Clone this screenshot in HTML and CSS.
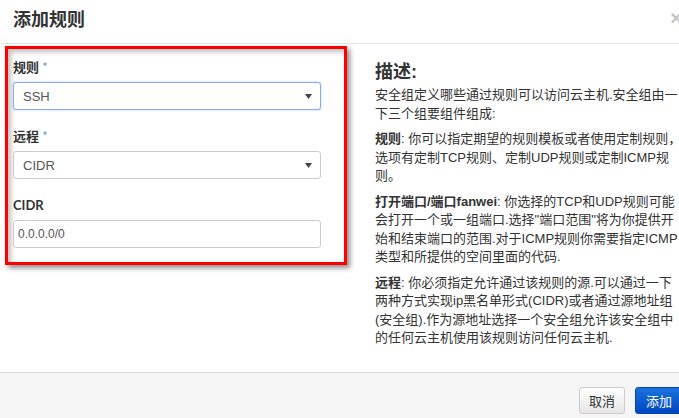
FILE: index.html
```html
<!DOCTYPE html>
<html lang="zh-CN">
<head>
    <meta charset="UTF-8">
    <meta name="viewport" content="width=device-width, initial-scale=1.0">
    <title>添加规则</title>
    <link rel="stylesheet" href="styles.css">
</head>
<body>
    <div class="modal">
        <div class="modal-header">
            <h3 class="modal-title">添加规则</h3>
            <span class="close">×</span>
        </div>

        <div class="modal-body">
            <!-- Form fields -->
            <div class="form-box">
                <div class="form-group">
                    <label>规则 <span class="req">*</span></label>
                    <div class="select focused">
                        <span>SSH</span>
                        <svg class="caret" width="7" height="5" viewBox="0 0 7 5"><polygon points="0,0 7,0 3.5,5"/></svg>
                    </div>
                </div>
                <div class="form-group">
                    <label>远程 <span class="req">*</span></label>
                    <div class="select">
                        <span>CIDR</span>
                        <svg class="caret" width="7" height="5" viewBox="0 0 7 5"><polygon points="0,0 7,0 3.5,5"/></svg>
                    </div>
                </div>
                <div class="form-group">
                    <label>CIDR</label>
                    <div class="input">0.0.0.0/0</div>
                </div>
            </div>

            <!-- Help text -->
            <div class="help">
                <h3>描述:</h3>
                <p>安全组定义哪些通过规则可以访问云主机.安全组由一下三个组要组件组成:</p>
                <p><strong>规则</strong>: 你可以指定期望的规则模板或者使用定制规则，选项有定制TCP规则、定制UDP规则或定制ICMP规则。</p>
                <p><strong>打开端口/端口fanwei</strong>: 你选择的TCP和UDP规则可能会打开一个或一组端口.选择"端口范围"将为你提供开始和结束端口的范围.对于ICMP规则你需要指定ICMP类型和所提供的空间里面的代码.</p>
                <p><strong>远程</strong>: 你必须指定允许通过该规则的源.可以通过一下两种方式实现ip黑名单形式(CIDR)或者通过源地址组(安全组).作为源地址选择一个安全组允许该安全组中的任何云主机使用该规则访问任何云主机.</p>
            </div>
        </div>

        <div class="modal-footer">
            <button class="btn">取消</button>
            <button class="btn btn-primary">添加</button>
        </div>
    </div>
</body>
</html>
```

FILE: styles.css
```css
/* General Styles */
html, body {
    margin: 0;
    background: #fff;
    overflow: hidden;
}

body {
    font-family: 'Liberation Sans', 'Noto Sans CJK SC', sans-serif;
    color: #333;
}

.modal {
    width: 700px;
}

/* Header */
.modal-header {
    display: flex;
    justify-content: space-between;
    align-items: flex-start;
    padding: 10px 18px 13px 13px;
    border-bottom: 1px solid #e5e5e5;
}

.modal-title {
    margin: 0;
    font-size: 18px;
    line-height: 20px;
    font-weight: bold;
    color: #333;
}

.close {
    font-size: 20px;
    line-height: 20px;
    font-weight: bold;
    color: #c4c4c4;
    margin-top: -2px;
}

/* Body */
.modal-body {
    display: flex;
    height: 328px;
    box-sizing: border-box;
    padding: 2px 0 0 5px;
}

.form-box {
    width: 342px;
    align-self: flex-start;
    box-sizing: border-box;
    padding: 8px 0 14px 5px;
    border: 3px solid #ff0000;
    box-shadow: 3px 3px 5px rgba(0, 0, 0, 0.45), inset 3px 3px 5px rgba(0, 0, 0, 0.25);
}

.form-group {
    margin-bottom: 16px;
}

.form-group:last-child {
    margin-bottom: 0;
}

label {
    display: block;
    font-family: 'Lato', 'Noto Sans CJK SC', sans-serif;
    font-size: 13px;
    line-height: 20px;
    font-weight: bold;
    color: #333;
    margin-bottom: 5px;
}

.req {
    color: #6a93c8;
    font-weight: normal;
}

.select,
.input {
    width: 308px;
    height: 28px;
    box-sizing: border-box;
    border: 1px solid #ccc;
    border-radius: 3px;
    background: #fff;
    font-size: 13px;
    color: #555;
}

.select {
    display: flex;
    justify-content: space-between;
    align-items: center;
    padding: 0 8px 0 9px;
}

.select.focused {
    border-color: #8aaef0;
    box-shadow: 0 0 2px rgba(102, 150, 233, 0.6);
}

.caret {
    fill: #444;
}

.input {
    display: flex;
    align-items: center;
    padding: 0 4px;
    font-size: 12px;
}

/* Help text */
.help {
    width: 307px;
    margin-left: 28px;
    padding-top: 16px;
    font-size: 13px;
    line-height: 18.5px;
    color: #333;
}

.help h3 {
    margin: 0 0 4px;
    font-size: 18px;
    line-height: 20px;
    font-weight: bold;
}

.help p {
    margin: 0 0 7px;
}

/* Footer */
.modal-footer {
    display: flex;
    justify-content: flex-end;
    gap: 10px;
    padding: 14px 17px 20px 0;
    background: #f5f5f5;
    border-top: 1px solid #ddd;
}

.btn {
    height: 27px;
    padding: 0 9px;
    font-family: 'Liberation Sans', 'Noto Sans CJK SC', sans-serif;
    font-size: 13px;
    color: #333;
    border: 1px solid #ccc;
    border-radius: 3px;
    background: linear-gradient(#ffffff, #e6e6e6);
}

.btn-primary {
    padding: 0 10px;
    color: #fff;
    border-color: #0044bb;
    background: linear-gradient(#1a72dc, #0046c2);
}
```
